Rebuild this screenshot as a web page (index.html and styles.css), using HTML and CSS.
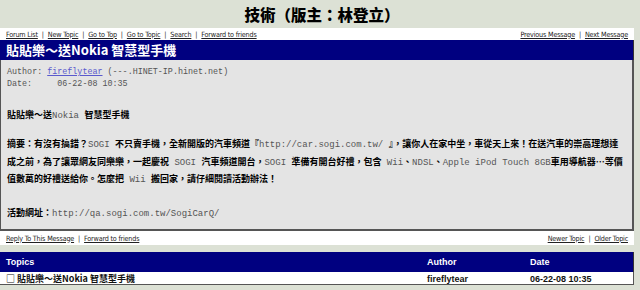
FILE: index.html
```html
<!DOCTYPE html>
<html>
<head>
<meta charset="utf-8">
<link rel="stylesheet" href="styles.css">
</head>
<body>
<div class="page">
  <h1 class="forum-title">技術（版主：林登立）</h1>
  <div class="frame">
    <div class="navbar">
      <div class="nav-left">
        <a href="#">Forum List</a><span class="sep">|</span><a href="#">New Topic</a><span class="sep">|</span><a href="#">Go to Top</a><span class="sep">|</span><a href="#">Go to Topic</a><span class="sep">|</span><a href="#">Search</a><span class="sep">|</span><a href="#">Forward to friends</a>
      </div>
      <div class="nav-right">
        <a href="#">Previous Message</a><span class="sep">|</span><a href="#">Next Message</a>
      </div>
    </div>
    <div class="subject-bar">貼貼樂～送Nokia 智慧型手機</div>
    <div class="message">
      <div class="meta">
        <div>Author: <a class="author" href="#">fireflytear</a> (---.HINET-IP.hinet.net)</div>
        <div>Date:&nbsp;&nbsp;&nbsp;&nbsp;&nbsp;06-22-08 10:35</div>
      </div>
      <div class="msg-title">貼貼樂～送<span class="m">Nokia </span>智慧型手機</div>
      <div class="msg-body">
        <div class="line">摘要：有沒有搞錯？<span class="m">SOGI </span>不只賣手機，全新開版的汽車頻道『<span class="m">http://car.sogi.com.tw/ </span>』，讓你人在家中坐，車從天上來！在送汽車的崇高理想達</div>
        <div class="line">成之前，為了讓眾網友同樂樂，一起慶祝<span class="m"> SOGI </span>汽車頻道開台，<span class="m">SOGI </span>準備有開台好禮，包含<span class="m"> Wii</span>、<span class="m">NDSL</span>、<span class="m">Apple iPod Touch 8GB</span>車用導航器…等價</div>
        <div class="line">值數萬的好禮送給你。怎麼把<span class="m"> Wii </span>搬回家，請仔細閱讀活動辦法！</div>
      </div>
      <div class="msg-url">活動網址：<span class="m">http://qa.sogi.com.tw/SogiCarQ/</span></div>
    </div>
    <div class="navbar bottom-nav">
      <div class="nav-left">
        <a href="#">Reply To This Message</a><span class="sep">|</span><a href="#">Forward to friends</a>
      </div>
      <div class="nav-right">
        <a href="#">Newer Topic</a><span class="sep">|</span><a href="#">Older Topic</a>
      </div>
    </div>
  </div>
  <div class="topics">
    <div class="topics-head">
      <span class="col-topic">Topics</span>
      <span class="col-author">Author</span>
      <span class="col-date">Date</span>
    </div>
    <div class="topics-row">
      <span class="col-topic">□ 貼貼樂～送Nokia 智慧型手機</span>
      <span class="col-author">fireflytear</span>
      <span class="col-date">06-22-08 10:35</span>
    </div>
  </div>
</div>
</body>
</html>
```
FILE: styles.css
```css
html, body {
  margin: 0;
  padding: 0;
  background: #dce1d5;
}
.page {
  width: 640px;
  height: 290px;
  overflow: hidden;
}
.forum-title {
  margin: 0;
  height: 28px;
  line-height: 28px;
  text-align: center;
  font-family: "Noto Sans CJK TC", sans-serif;
  font-weight: 900;
  font-size: 15.5px;
  color: #000;
  padding-left: 4px;
}
.frame {
  width: 634px;
}
.navbar {
  display: flex;
  justify-content: space-between;
  align-items: center;
  background: #fff;
  height: 12px;
  padding: 0 6px;
  font-family: "DejaVu Sans Condensed", "DejaVu Sans", sans-serif;
  font-stretch: condensed;
  font-size: 7.2px;
  letter-spacing: -0.2px;
  color: #222;
}
.navbar a {
  color: #222;
  text-decoration: underline;
}
.sep {
  margin: 0 4px;
  color: #222;
}
.subject-bar {
  background: #000080;
  color: #fff;
  height: 20px;
  line-height: 20px;
  padding-left: 6px;
  font-family: "Noto Sans CJK TC", sans-serif;
  font-weight: bold;
  font-size: 13px;
  border-right: 1px solid #333;
}
.message {
  background: #e4e4e4;
  border-left: 1px solid #555;
  border-right: 2px solid #555;
  border-bottom: 2px solid #555;
  padding: 6px 6px 13px;
  height: 150px;
  box-sizing: content-box;
}
.meta {
  font-family: "Liberation Mono", monospace;
  font-size: 8.4px;
  line-height: 12px;
  color: #555;
}
.author {
  color: #5a5acd;
  text-decoration: underline;
}
.msg-title, .msg-body, .msg-url {
  font-family: "Noto Sans CJK TC", sans-serif;
  font-weight: bold;
  font-size: 9px;
  color: #000;
}
.msg-title {
  margin-top: 18px;
  line-height: 14px;
}
.msg-body {
  margin-top: 13px;
  line-height: 16.5px;
}
.line {
  white-space: nowrap;
}
.msg-url {
  margin-top: 16px;
  line-height: 16px;
}
.m {
  font-family: "Liberation Mono", monospace;
  font-weight: normal;
  color: #555;
}
.bottom-nav {
  height: 14px;
}
.topics {
  margin-top: 7px;
  width: 634px;
  font-family: "Liberation Sans", "Noto Sans CJK TC", sans-serif;
  font-weight: bold;
  font-size: 9px;
}
.topics-head, .topics-row {
  display: grid;
  grid-template-columns: 421px 103px 1fr;
  align-items: center;
  padding-left: 6px;
}
.topics-head {
  background: #000080;
  color: #fff;
  height: 20px;
  border-right: 1px solid #333;
}
.topics-row {
  background: #fff;
  color: #111;
  height: 12px;
  border-right: 1px solid #555;
  border-bottom: 1px solid #555;
}
.topics-row .col-topic {
  font-family: "Noto Sans CJK TC", sans-serif;
}
```
